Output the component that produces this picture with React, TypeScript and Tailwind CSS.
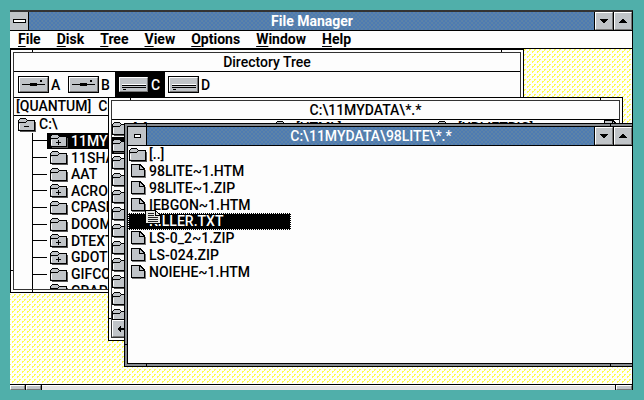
import type { ReactNode } from "react";

const inkText = "text-sm leading-4 whitespace-pre font-medium";

function Folder({ mark }: { mark?: "+" | "-" }) {
  return (
    <svg className="h-[15px] w-[18px] shrink-0" viewBox="0 0 18 15" fill="none" shapeRendering="crispEdges">
      <path d="M0.500 13.500V3.500L2.500 1.500H7.500L9.500 3.500H16.500V13.500Z" fill="#c0c4c8" stroke="#000" />
      <path d="M1 5.500H7.500L9.500 3.500" stroke="#000" />
      <path d="M1.500 12V6.500" stroke="#fff" />
      <path d="M2 14.500H17.500V5" stroke="#555" />
      {mark && <path d="M6 9.500H11" stroke="#000" />}
      {mark === "+" && <path d="M8.500 7V12" stroke="#000" />}
    </svg>
  );
}

function Page() {
  return (
    <svg className="h-[14px] w-[15px] shrink-0" viewBox="0 0 15 14" fill="none" shapeRendering="crispEdges">
      <path d="M0.500 0.500H9L13.500 5V12.500H0.500Z" fill="#c0c4c8" stroke="#000" />
      <path d="M8.500 1V5.500H13" stroke="#000" />
      <path d="M1 13.500H14.500V6" stroke="#777" />
    </svg>
  );
}

function DragPage() {
  return (
    <svg className="block h-[15px] w-[17px]" viewBox="0 0 17 15" fill="none" shapeRendering="crispEdges">
      <path d="M0.500 0.500H10L15.500 5V13.500H0.500Z" fill="#e8e8e4" stroke="#000" />
      <path d="M10.500 0.500V5.500H15.500" stroke="#000" />
      <path d="M3 3.500H9M3 5.500H9M3 7.500H13M3 9.500H13M3 11.500H13" stroke="#222" />
    </svg>
  );
}

function Drive({ kind }: { kind: "floppy" | "hard" }) {
  return (
    <svg className="h-[17px] w-[31px]" viewBox="0 0 31 17" fill="none" shapeRendering="crispEdges">
      <rect x="0.500" y="0.500" width="30" height="16" fill="#c0c4c8" stroke="#000" />
      <path d="M1.500 15V1.500H29" stroke="#fff" />
      <path d="M2 15.500H29.500V2" stroke="#777" />
      {kind === "floppy" ? (
        <>
          <path d="M4 8.500H27" stroke="#000" />
          <path d="M12 8.500H19" stroke="#000" strokeWidth="3" />
          <path d="M22 4.500H24" stroke="#000" strokeWidth="2" />
        </>
      ) : (
        <>
          <path d="M4 9.500H28M4 11.500H28M5 13.500H8" stroke="#000" />
          <path d="M4 8.500H28" stroke="#fff" />
        </>
      )}
    </svg>
  );
}

function Arrow({ d }: { d: string }) {
  return (
    <svg className="h-[8px] w-[8px] shrink-0" viewBox="0 0 8 8" shapeRendering="crispEdges">
      <path d={d} fill="#000" />
    </svg>
  );
}

const face = "flex shrink-0 items-center justify-center border border-t-white border-l-white border-r-[#777] border-b-[#777] bg-[#c0c4c8]";
const blue = "bg-[#5580ab] bg-[repeating-conic-gradient(#4e7bb2_0_25%,#5c83a8_0_50%)] bg-size-[4px_4px]";

function TitleBar({ title, main }: { title: string; main?: boolean }) {
  return (
    <header className="flex h-[19px] shrink-0 border-b border-black">
      <button aria-label="Control menu" className="flex w-[19px] shrink-0 items-center justify-center border-r border-black bg-[#c0c4c8]">
        <span className={`h-1 border border-black bg-white ${main ? "w-[13px]" : "w-[7px]"}`} />
      </button>
      <h2 className={`min-w-0 flex-1 text-center text-sm leading-[18px] text-white ${main ? "font-bold" : "font-medium"} ${blue}`}>{title}</h2>
      <button aria-label="Minimize" className={`w-[18px] outline outline-black ${face}`}>
        <Arrow d="M0 2H8V3H7V4H6V5H5V6H3V5H2V4H1V3H0Z" />
      </button>
      <button aria-label="Maximize" className={`ml-px w-[18px] ${face}`}>
        <Arrow d="M0 6H8V5H7V4H6V3H5V2H3V3H2V4H1V5H0Z" />
      </button>
    </header>
  );
}

function CornerTicks() {
  return (
    <>
      <span className="absolute top-0 left-[21px] h-[2px] w-px bg-black" />
      <span className="absolute top-0 right-[21px] h-[2px] w-px bg-black" />
      <span className="absolute bottom-0 left-[21px] h-[2px] w-px bg-black" />
      <span className="absolute right-[21px] bottom-0 h-[2px] w-px bg-black" />
      <span className="absolute bottom-[21px] left-0 h-px w-[2px] bg-black" />
    </>
  );
}

function Pane({ title, className, children }: { title: string; className: string; children: ReactNode }) {
  return (
    <section className={`absolute border border-black bg-[#fdfdfd] p-[2px] ${className}`}>
      <CornerTicks />
      <div className="flex h-full flex-col overflow-hidden border border-[#333]">
        <h2 className="h-[19px] shrink-0 border-b border-black text-center text-sm leading-[18px] font-medium">{title}</h2>
        {children}
      </div>
    </section>
  );
}

const menus = ["File", "Disk", "Tree", "View", "Options", "Window", "Help"];
const drives = ["A", "B", "C", "D"];
const folders: [string, boolean][] = [
  ["11MYDATA", true],
  ["11SHARE", false],
  ["AAT", false],
  ["ACROREAD", true],
  ["CPASM", false],
  ["DOOM", false],
  ["DTEXT", true],
  ["GDOT", true],
  ["GIFCON", false],
  ["GRAPHICS", false],
];
const files = ["98LITE~1.HTM", "98LITE~1.ZIP", "IEBGON~1.HTM", "KILLER.TXT", "LS-0_2~1.ZIP", "LS-024.ZIP", "NOIEHE~1.HTM"];
const slots = Array.from({ length: 12 }, (_, i) => i);

export default function App() {
  return (
    <main className="h-screen bg-[#50afaa] py-[10px] pr-[11px] pl-[10px] font-['Roboto','Liberation_Sans',sans-serif] text-black">
      <div className="flex h-full flex-col overflow-hidden border-t-2 border-r border-t-[#333] border-r-black bg-[#fdfdfd]">
        <TitleBar title="File Manager" main />
        <nav className="flex h-[18px] shrink-0 gap-4 border-b border-black pb-[2px] pl-2">
          {menus.map((m) => (
            <button key={m} className="text-sm leading-4 font-bold">
              <u className="underline-offset-2">{m[0]}</u>
              {m.slice(1)}
            </button>
          ))}
        </nav>

        <div className="relative min-h-0 flex-1 overflow-hidden bg-[#fffffc] bg-[radial-gradient(#ffff50_1px,transparent_1px),radial-gradient(#ffff50_1px,transparent_1px)] bg-size-[5px_5px] bg-position-[0_0,2px_3px]">
          <Pane title="Directory Tree" className="top-0 left-0 h-[244px] w-[514px]">
            <div className="flex h-[26px] shrink-0 border-b border-black pl-px">
              {drives.map((d, i) => (
                <button key={d} className={`flex w-[50px] items-center gap-[2px] pl-[3px] text-sm font-medium ${d === "C" ? "bg-black text-white" : ""}`}>
                  <Drive kind={i < 2 ? "floppy" : "hard"} />
                  {d}
                </button>
              ))}
            </div>
            <p className={`h-[18px] shrink-0 border-b border-black pl-[2px] ${inkText}`}>[QUANTUM]  C:\11MYDATA\*.*</p>
            <ul className={`grid h-[183px] shrink-0 auto-rows-fr ${inkText}`}>
              <li className="flex items-center gap-[3px] pl-1">
                <Folder mark="-" />
                C:\
              </li>
              {folders.map(([name, more], i) => (
                <li key={name} className="ml-[18px] flex items-center border-l border-black">
                  <span className="w-[14px] border-t border-black" />
                  <span className={`flex items-center gap-[3px] pr-1 pl-[3px] ${i === 0 ? "bg-black text-white" : ""}`}>
                    <Folder mark={more ? "+" : undefined} />
                    {name}
                  </span>
                </li>
              ))}
            </ul>
          </Pane>

          <Pane title="C:\11MYDATA\*.*" className="top-[48px] left-[98px] h-[244px] w-[515px]">
            <div className="flex min-h-0 flex-1 overflow-hidden">
              <ul className="w-[163px] shrink-0">
                {slots.map((n) => (
                  <li key={n} className={`flex h-[17px] items-center text-sm ${n === 1 ? "bg-black" : ""}`}>
                    <Folder />
                    {n === 0 && <span className="pl-[3px]">[..]</span>}
                  </li>
                ))}
              </ul>
              <p className="flex w-[162px] shrink-0 gap-[3px] text-sm leading-4 font-medium">
                <Folder />
                [HTML]
              </p>
              <p className="flex flex-1 gap-[3px] text-sm leading-4 font-medium">
                <Folder />
                [URLIETRIC]
              </p>
              <Page />
            </div>
            <button aria-label="Scroll left" className={`h-[17px] w-[17px] outline outline-black ${face}`}>
              <Arrow d="M0 4L4 0V3H8V5H4V8Z" />
            </button>
          </Pane>

          <section className="absolute top-[74px] right-0 left-[114px] h-[244px] border-y border-l border-black bg-[#888c90] py-[2px] pl-[2px]">
            <CornerTicks />
            <div className="flex h-full flex-col border-y border-l border-black bg-[#fdfdfd]">
              <TitleBar title="C:\11MYDATA\98LITE\*.*" />
              <ul className={`grid h-[134px] auto-rows-fr ${inkText}`}>
                <li className="flex items-center gap-[2px] pl-px">
                  <Folder />
                  [..]
                </li>
                {files.map((f) =>
                  f === "KILLER.TXT" ? (
                    <li key={f} className="relative flex w-[163px] items-center border border-dotted border-white bg-black pl-5 text-white">
                      {f}
                      <span className="absolute -top-1 left-4">
                        <DragPage />
                      </span>
                    </li>
                  ) : (
                    <li key={f} className="flex items-center gap-[3px] pl-[3px]">
                      <Page />
                      {f}
                    </li>
                  ),
                )}
              </ul>
            </div>
          </section>
        </div>

        <footer className="flex h-[6px] shrink-0 overflow-hidden border-t border-black bg-[#e4e4e4]">
          <span className={`w-[15px] ${face}`} />
          <span className={`ml-px w-[15px] outline outline-black ${face}`} />
          <span className="ml-px flex-1 border-t border-white" />
          <span className={`w-[16px] outline outline-black ${face}`} />
        </footer>
      </div>
    </main>
  );
}
